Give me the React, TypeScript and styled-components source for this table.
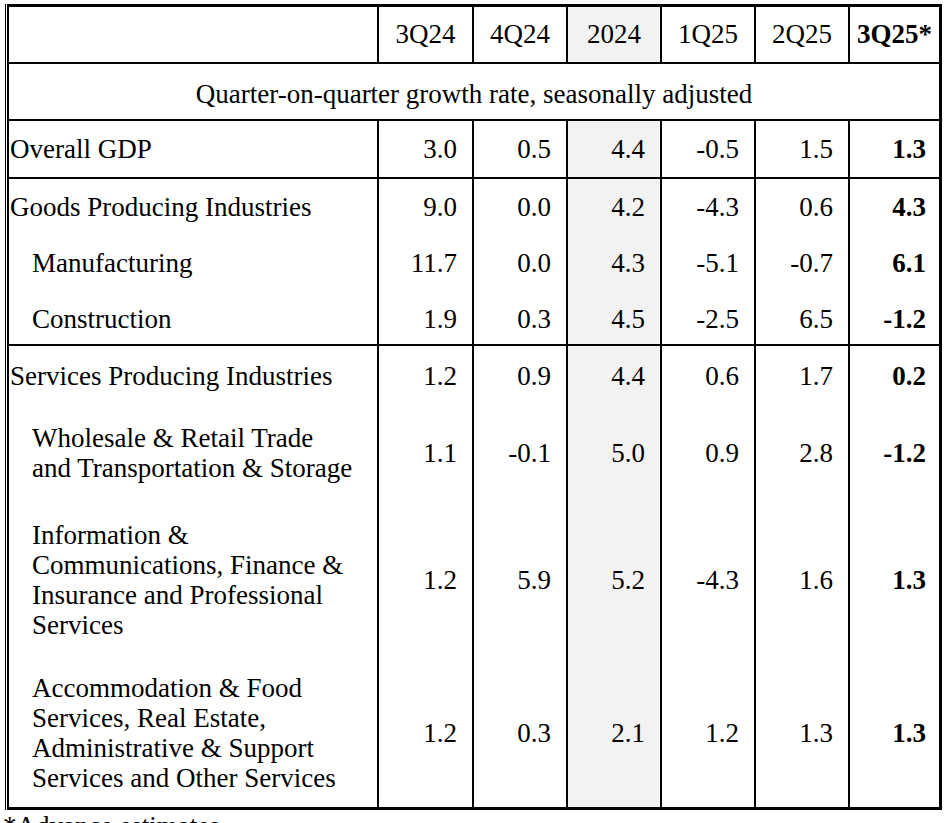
import React from "react";
import styled, { createGlobalStyle } from "styled-components";

const GlobalBody = createGlobalStyle`
  html, body {
    margin: 0;
    padding: 0;
    background: #ffffff;
  }
  body {
    font-family: "Liberation Serif", "Times New Roman", serif;
    color: #000;
  }
`;

const COLUMNS = "370px 95px 94px 94px 94px 94px 89px";

type Line = {
  label: string;
  indent?: boolean;
  values: string[];
  pad: [number, number];
  rule?: boolean;
};

const heads = ["3Q24", "4Q24", "2024", "1Q25", "2Q25", "3Q25*"];

const groups: Line[][] = [
  [{ label: "Overall GDP", values: ["3.0", "0.5", "4.4", "-0.5", "1.5", "1.3"], pad: [13, 13], rule: true }],
  [
    { label: "Goods Producing Industries", values: ["9.0", "0.0", "4.2", "-4.3", "0.6", "4.3"], pad: [13, 12] },
    { label: "Manufacturing", indent: true, values: ["11.7", "0.0", "4.3", "-5.1", "-0.7", "6.1"], pad: [14, 12] },
    { label: "Construction", indent: true, values: ["1.9", "0.3", "4.5", "-2.5", "6.5", "-1.2"], pad: [14, 10], rule: true },
  ],
  [
    { label: "Services Producing Industries", values: ["1.2", "0.9", "4.4", "0.6", "1.7", "0.2"], pad: [15, 15] },
    {
      label: "Wholesale & Retail Trade\nand Transportation & Storage",
      indent: true,
      values: ["1.1", "-0.1", "5.0", "0.9", "2.8", "-1.2"],
      pad: [17, 18],
    },
    {
      label: "Information &\nCommunications, Finance &\nInsurance and Professional\nServices",
      indent: true,
      values: ["1.2", "5.9", "5.2", "-4.3", "1.6", "1.3"],
      pad: [19, 16],
    },
    {
      label: "Accommodation & Food\nServices, Real Estate,\nAdministrative & Support\nServices and Other Services",
      indent: true,
      values: ["1.2", "0.3", "2.1", "1.2", "1.3", "1.3"],
      pad: [17, 14],
    },
  ],
];

const GrowthTable = () => {
  return (
    <Page>
      <GlobalBody />
      <Frame>
        <Table>
          <Row $rule>
            <Cell $pad={[12, 13]} />
            {heads.map((h, i) => (
              <Cell key={h} $pad={[12, 13]} $align="center" $shade={i === 2} $bold={i === 5} $last={i === 5}>
                {h}
              </Cell>
            ))}
          </Row>
          <SubRow>Quarter-on-quarter growth rate, seasonally adjusted</SubRow>
          {groups.map((g, gi) =>
            g.map((line, li) => (
              <Row key={gi + "-" + li} $rule={line.rule}>
                <LabelCell $pad={line.pad} $indent={line.indent}>
                  {line.label}
                </LabelCell>
                {line.values.map((v, i) => (
                  <Cell key={i} $pad={line.pad} $align="flex-end" $shade={i === 2} $bold={i === 5} $last={i === 5}>
                    {v}
                  </Cell>
                ))}
              </Row>
            ))
          )}
        </Table>
      </Frame>
      <Footnote>*Advance estimates</Footnote>
    </Page>
  );
};

const Page = styled.div`
  padding: 4px 0 0 3px;
  font-size: 27px;
  line-height: 30px;
`;

const Frame = styled.div`
  margin-left: 2px;
  width: 936px;
  border-left: 1px solid #000;
  padding-left: 1px;
  box-sizing: border-box;
`;

const Table = styled.div`
  border-left: 2px solid #000;
  border-top: 3px solid #000;
  border-right: 3px solid #000;
  border-bottom: 3px solid #000;
  width: 935px;
  box-sizing: border-box;
`;

const Row = styled.div<{ $rule?: boolean }>`
  display: grid;
  grid-template-columns: ${COLUMNS};
  border-bottom: ${(p) => (p.$rule ? "2px solid #000" : "none")};
`;

const SubRow = styled.div`
  padding: 15px 0 10px;
  text-align: center;
  border-bottom: 2px solid #000;
`;

const Cell = styled.div<{
  $pad: [number, number];
  $align?: string;
  $shade?: boolean;
  $bold?: boolean;
  $last?: boolean;
}>`
  display: flex;
  align-items: center;
  justify-content: ${(p) => p.$align || "flex-start"};
  padding: ${(p) => `${p.$pad[0]}px ${p.$last ? 13 : 15}px ${p.$pad[1]}px 0`};
  min-height: 30px;
  background: ${(p) => (p.$shade ? "#f2f2f2" : "transparent")};
  font-weight: ${(p) => (p.$bold ? "bold" : "normal")};
  border-right: ${(p) => (p.$last ? "none" : "2px solid #000")};
  ${(p) => (p.$align === "center" ? "padding-right: 0;" : "")}
`;

const LabelCell = styled.div<{ $pad: [number, number]; $indent?: boolean }>`
  display: flex;
  align-items: center;
  white-space: pre-line;
  padding: ${(p) => `${p.$pad[0]}px 4px ${p.$pad[1]}px ${p.$indent ? 23 : 1}px`};
  border-right: 2px solid #000;
`;

const Footnote = styled.div`
  margin-top: 1px;
`;

export default GrowthTable;
